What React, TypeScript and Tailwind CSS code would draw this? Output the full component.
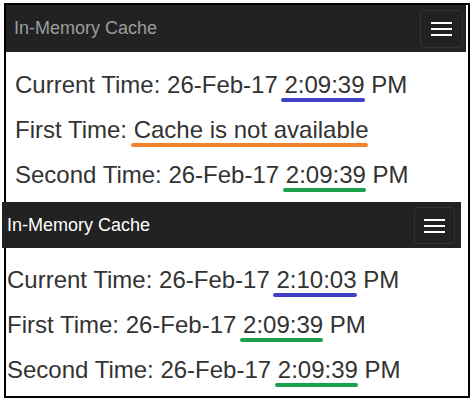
import React from "react";

type Part = { text: string; mark?: "blue" | "orange" | "green" };

const markColor: Record<string, string> = {
    blue: "bg-[#3f40c4]",
    orange: "bg-[#f5822a]",
    green: "bg-[#1ba04c]",
};

function Row({ label, parts }: { label: string; parts: Part[] }) {
    return (
        <div className="h-[45px] leading-[45px] whitespace-nowrap">
            {label}{" "}
            {parts.map((p, i) =>
                p.mark ? (
                    <span key={i} className="relative">
                        {p.text}
                        <span className={`absolute left-[-3px] right-0 -bottom-[4px] h-[4px] rounded-full ${markColor[p.mark]}`} />
                    </span>
                ) : (
                    <span key={i}>{p.text}</span>
                )
            )}
        </div>
    );
}

function Navbar({ titleClass, className, buttonClass }: { titleClass: string; className: string; buttonClass: string }) {
    return (
        <div className={`flex items-center justify-between bg-[#222222] ${className}`}>
            <span className={`text-[18px] ${titleClass}`}>In-Memory Cache</span>
            <div className={`flex flex-col justify-center gap-[4px] border border-[#333] rounded-[4px] ${buttonClass}`}>
                <span className="block h-[2px] bg-white" />
                <span className="block h-[2px] bg-white" />
                <span className="block h-[2px] bg-white" />
            </div>
        </div>
    );
}

export default function App() {
    return (
        <div className="w-[472px] h-[400px] bg-white pt-[3px] pl-[4px] font-['Liberation_Sans',Arial,sans-serif] text-[#333333]">
            <div className="w-[466px] h-[395px] border-2 border-black flex flex-col">
                {/* first capture */}
                <Navbar
                    className="h-[47px] mr-[2px] pl-[8px] pr-[3px]"
                    titleClass="text-[#9d9d9d]"
                    buttonClass="w-[43px] h-[38px] px-[10px] mt-[1px]"
                />
                <div className="mt-[10px] pl-[9px] text-[24px]">
                    <Row label="Current Time:" parts={[{ text: "26-Feb-17 " }, { text: "2:09:39", mark: "blue" }, { text: " PM" }]} />
                    <Row label="First Time:" parts={[{ text: "Cache is not available", mark: "orange" }]} />
                    <Row label="Second Time:" parts={[{ text: "26-Feb-17 " }, { text: "2:09:39", mark: "green" }, { text: " PM" }]} />
                </div>

                {/* second capture */}
                <Navbar
                    className="h-[46px] mt-[5px] -ml-[4px] w-[459px] pl-[5px] pr-[6px]"
                    titleClass="text-white"
                    buttonClass="w-[41px] h-[37px] px-[9px] mt-[1px]"
                />
                <div className="mt-[9px] pl-[1px] text-[24px]">
                    <Row label="Current Time:" parts={[{ text: "26-Feb-17 " }, { text: "2:10:03", mark: "blue" }, { text: " PM" }]} />
                    <Row label="First Time:" parts={[{ text: "26-Feb-17 " }, { text: "2:09:39", mark: "green" }, { text: " PM" }]} />
                    <Row label="Second Time:" parts={[{ text: "26-Feb-17 " }, { text: "2:09:39", mark: "green" }, { text: " PM" }]} />
                </div>
            </div>
        </div>
    );
}
